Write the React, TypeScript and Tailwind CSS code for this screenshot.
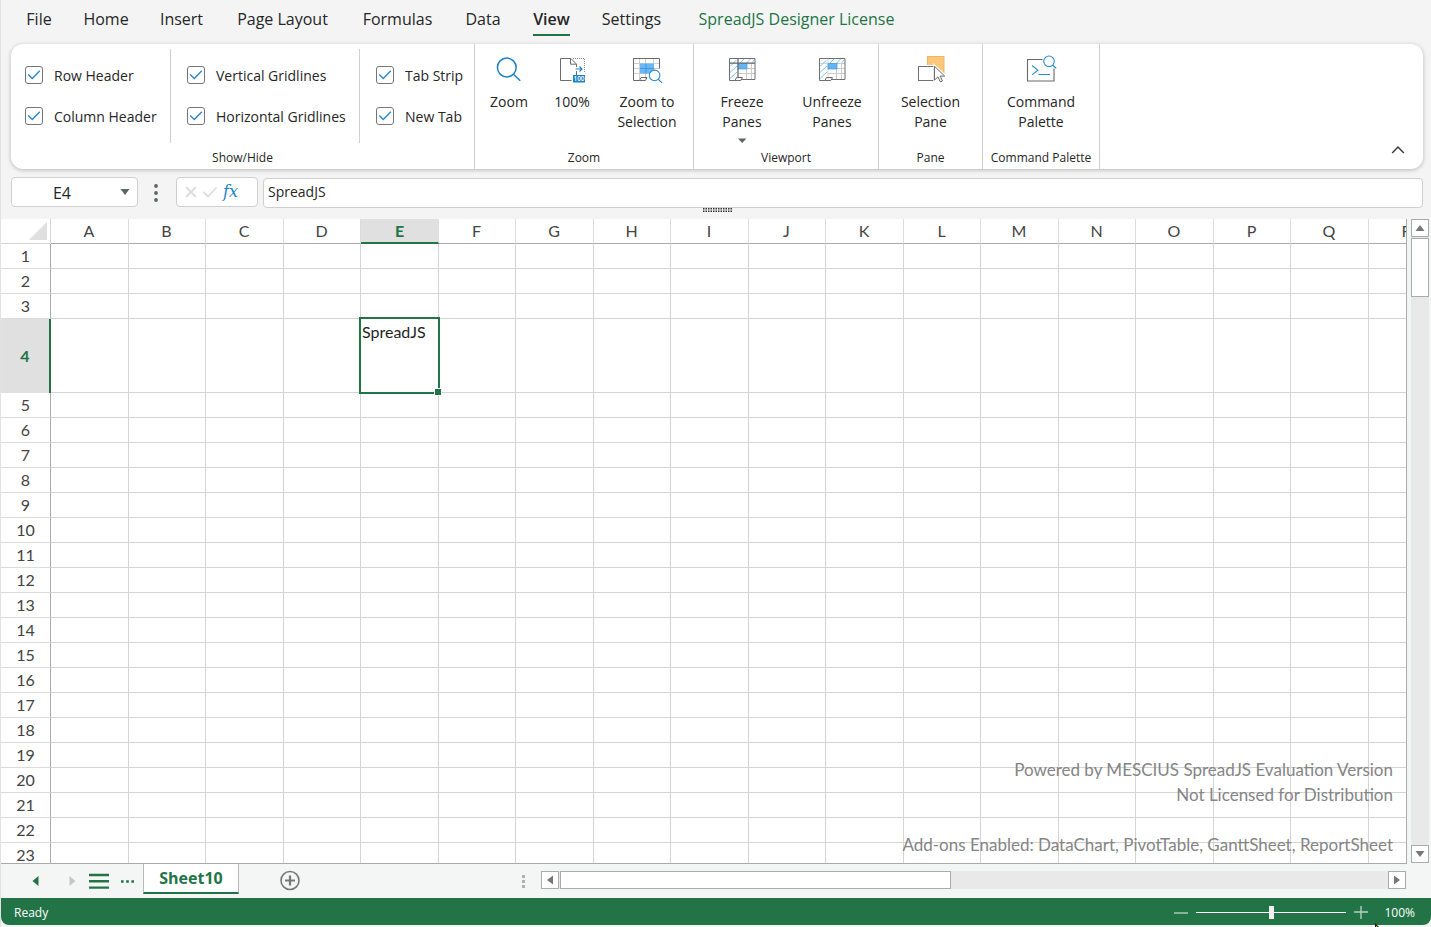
import React from "react";

const ui = "font-['Open_Sans','Noto_Sans',sans-serif]";
const gridFont = "font-['Lato','Open_Sans',sans-serif]";

const menu = [
  { label: "File", width: "w-[58px]" },
  { label: "Home", width: "w-[76px]" },
  { label: "Insert", width: "w-[75px]" },
  { label: "Page Layout", width: "w-[127px]" },
  { label: "Formulas", width: "w-[103px]" },
  { label: "Data", width: "w-[68px]" },
  { label: "View", width: "w-[69px]" },
  { label: "Settings", width: "w-[91px]" },
  { label: "SpreadJS Designer License", width: "w-[239px]" },
];

const columns = "ABCDEFGHIJKLMNOPQR".split("");
const rows = Array.from({ length: 23 }, (_, i) => i + 1);

function CheckItem({ label }: { label: string }) {
  return (
    <label className="flex h-[41px] items-center gap-[11px] whitespace-nowrap text-sm leading-[22px] text-[#262626]">
      <span className="grid size-[18px] shrink-0">
        <input
          type="checkbox"
          defaultChecked
          className="peer col-start-1 row-start-1 size-[18px] appearance-none rounded-[3px] border border-[#767676] bg-white"
        />
        <svg
          viewBox="0 0 18 18"
          className="pointer-events-none invisible col-start-1 row-start-1 size-[18px] peer-checked:visible"
          fill="none"
          stroke="#2b88d0"
          strokeWidth="1.4"
        >
          <path d="M3.2 8.4 7.3 12.4 14.8 4.8" />
        </svg>
      </span>
      <span className="pt-[2px]">{label}</span>
    </label>
  );
}

function Group({ label, className, children }: { label: string; className: string; children: React.ReactNode }) {
  return (
    <section className={`flex shrink-0 flex-col border-r border-[#d0d0d0] ${className}`}>
      <div className="flex h-[103px]">{children}</div>
      <div className="whitespace-nowrap text-center text-xs leading-[22px] text-[#262626]">{label}</div>
    </section>
  );
}

function Tool({
  lines,
  icon,
  className,
  arrow,
}: {
  lines: string[];
  icon: React.ReactNode;
  className: string;
  arrow?: boolean;
}) {
  return (
    <button className={`flex flex-col items-center pt-[9px] text-sm leading-5 text-[#262626] ${className}`}>
      <span className="mb-[7px] flex h-8 items-center">{icon}</span>
      {lines.map((l) => (
        <span key={l} className="whitespace-nowrap">
          {l}
        </span>
      ))}
      {arrow && (
        <svg viewBox="0 0 10 6" className="mt-[6px] h-[6px] w-[10px]">
          <path d="M1 .5h8.4L5.2 5z" fill="#5c6663" />
        </svg>
      )}
    </button>
  );
}

const ZoomIcon = () => (
  <svg viewBox="0 0 32 32" className="size-8" fill="none" stroke="#2080c4" strokeWidth="1.5">
    <circle cx="13.8" cy="14.5" r="9.4" />
    <path d="m20.5 21.2 6.8 6.6" />
  </svg>
);

const HundredIcon = () => (
  <svg viewBox="0 0 32 32" className="size-8" fill="none">
    <path d="M15.5 27.5H4.5v-22h10.5L20.5 11.2V14M14.5 5.5v5.7h6" stroke="#6d6d6d" />
    <path d="M20.5 18v4" stroke="#6d6d6d" />
    <path d="M17 5.5h11.5V20" stroke="#8a8a8a" strokeDasharray="1 1" />
    <path d="M19.5 16h6.5M23.5 13.5l2.5 2.5-2.5 2.5" stroke="#2080c4" strokeWidth="1.1" />
    <rect x="17" y="22" width="12" height="7.5" fill="#2080c4" />
    <text x="23" y="28.2" textAnchor="middle" fontSize="6.4" fontWeight="600" fill="#fff" className="font-['Open_Sans',sans-serif]">
      100
    </text>
  </svg>
);

const ZoomSelectionIcon = () => (
  <svg viewBox="0 0 32 32" className="size-8" fill="none">
    <path d="M8.5 6v20M14.5 6v20M22.5 6v20M3 10.5h26M3 15.5h26M3 20.5h26" stroke="#cfcfcf" />
    <rect x="9" y="10.5" width="14" height="10" fill="#6bb7f5" />
    <path d="M9 15.5h14M15 10.5v10" stroke="#3f9be2" />
    <path d="M8.5 27.5H2.5v-22h26V15.5M8.5 27.5l1.5-3h6l-1.5 3h-6" stroke="#696969" />
    <circle cx="23.6" cy="22.4" r="5.3" fill="#fff" stroke="#2b8ad0" strokeWidth="1.1" />
    <path d="m27.4 26.3 3.6 3.6" stroke="#2b8ad0" strokeWidth="1.2" />
  </svg>
);

const PanesIcon = ({ frozen }: { frozen?: boolean }) => (
  <svg viewBox="0 0 32 32" className="size-8" fill="none">
    <path d="M20.5 11v15M12 15.5h17M12 20.5h17M12 10.5h17M25.5 11v15" stroke="#cbcbcb" />
    <path d="M12 6v20M3.5 10.5h8" stroke="#d6d6d6" />
    <path d="m4 13.5 6-6M4 19.5l7-6.5M4 25.5l7-6.5M14 10l4-4M20.5 10l4-4M26 9.5l2.5-3" stroke="#7cc5ea" />
    <rect x="12" y="10.5" width="9" height="5.5" fill="#67b4f3" stroke="#3f98de" strokeWidth=".7" />
    {frozen && <path d="M3.5 10.2h25.5M12 6v18.5" stroke="#6a6a6a" strokeWidth="1.2" />}
    <path d="M9 27.5H3.5v-22h25.5v21H15M9 27.5l1.5-3h6l-1.7 3H9" stroke="#707070" />
  </svg>
);

const SelectionPaneIcon = () => (
  <svg viewBox="0 0 32 32" className="size-8" fill="none">
    <rect x="12.5" y="3.5" width="16.5" height="17" fill="#fcc67b" stroke="#eeb662" />
    <rect x="3.5" y="13.5" width="15.5" height="14" fill="#fff" stroke="#fff" strokeWidth="3" />
    <rect x="3.5" y="13.5" width="15.5" height="14" fill="#fff" stroke="#717171" />
    <path d="M19.5 12.8v14.7l3.7-3.3 2.3 5.3 2.6-1.2-2.3-5 4.7-.3z" fill="#fff" stroke="#fff" strokeWidth="2.4" />
    <path d="M19.5 13.3v13.8l3.5-3.3 2.4 5.2 2-1-2.2-4.9h4.5z" fill="#fff" stroke="#6b6b6b" />
  </svg>
);

const CommandIcon = () => (
  <svg viewBox="0 0 32 32" className="size-8" fill="none">
    <path d="M17.5 6.5h-15v21.5h26.5V15.5" stroke="#686868" strokeWidth="1.1" />
    <path d="m7 12.5 6 4.7-6 4.7M13.5 21.5h11.5" stroke="#2b8fce" strokeWidth="1.1" />
    <circle cx="24" cy="8.3" r="5.3" stroke="#2b8fce" strokeWidth="1.1" />
    <path d="m27.7 12.2 3.5 3" stroke="#2b8fce" strokeWidth="1.2" />
  </svg>
);

const scrollButton = "flex size-[18px] shrink-0 items-center justify-center border border-[#ababab] bg-white";

function Sheet() {
  return (
    <div className={`relative min-w-0 flex-1 overflow-hidden border-r border-b border-[#ababab] bg-white ${gridFont}`}>
      <table className="w-px table-fixed border-separate border-spacing-0 text-base leading-5 text-[#444]">
        <thead>
          <tr className="h-[25px]">
            <th className="w-[50px] border-r border-b border-r-[#d4d4d4] border-b-[#d4d4d4] p-0" aria-label="Select all">
              <svg viewBox="0 0 18 18" className="ml-auto mr-[3px] size-[18px]">
                <path d="M18 0v18H0z" fill="#dfdfdf" />
              </svg>
            </th>
            {columns.map((c, i) => (
              <th
                key={c}
                scope="col"
                className={`p-0 ${i % 2 ? "w-[77px]" : "w-[78px]"} ${
                  c === "E"
                    ? "border-r border-b-2 border-r-[#dcdcdc] border-b-[#227447] bg-[#e0e0e0] font-bold text-[#227447]"
                    : "border-r border-b border-r-[#dcdcdc] border-b-[#ababab] pr-px font-normal"
                }`}
              >
                {c}
              </th>
            ))}
          </tr>
        </thead>
        <tbody>
          {rows.map((r) => (
            <tr key={r} className={r === 4 ? "h-[74px]" : "h-[25px]"}>
              <th
                scope="row"
                className={`p-0 ${
                  r === 4
                    ? "border-r-2 border-[#227447] bg-[#e0e0e0] font-bold text-[#227447]"
                    : "border-r border-b border-r-[#ababab] border-b-[#dcdcdc] font-normal"
                }`}
              >
                {r}
              </th>
              {columns.map((c) =>
                r === 4 && c === "E" ? (
                  <td key={c} className="relative border-r border-b border-[#d4d4d4] p-0 align-top text-[#1f1f1f]">
                    <div className="px-px pt-[3px]">SpreadJS</div>
                    <div className="pointer-events-none absolute -top-0.5 -right-0.5 -bottom-0.5 -left-0.5 border-2 border-[#227447]">
                      <div className="absolute -right-1 -bottom-1 size-[8px] border border-white bg-[#227447]" />
                    </div>
                  </td>
                ) : (
                  <td key={c} className="border-r border-b border-[#d4d4d4] p-0" />
                ),
              )}
            </tr>
          ))}
        </tbody>
      </table>
      <div className="pointer-events-none absolute right-[13px] bottom-[6px] text-right text-[17px] leading-[25px] whitespace-nowrap text-[#858585]">
        <p>Powered by MESCIUS SpreadJS Evaluation Version</p>
        <p>Not Licensed for Distribution</p>
        <p className="mt-[25px]">Add-ons Enabled: DataChart, PivotTable, GanttSheet, ReportSheet</p>
      </div>
    </div>
  );
}

export default function App() {
  return (
    <div className={`relative flex h-screen flex-col overflow-hidden border-l border-[#e2e2e2] bg-[#f4f4f4] ${ui}`}>
      <nav className="flex h-11 shrink-0 pl-[9px] text-base text-[#262626]">
        {menu.map((m) => {
          const active = m.label === "View";
          const license = m.label.startsWith("SpreadJS");
          return (
            <button key={m.label} className={`flex shrink-0 justify-center pt-[7px] ${m.width}`}>
              <span
                className={`h-[29px] whitespace-nowrap leading-6 ${
                  active ? "border-b-2 border-[#227447] font-semibold" : license ? "text-[#227447]" : ""
                }`}
              >
                {m.label}
              </span>
            </button>
          );
        })}
      </nav>

      <div className="mr-2 ml-[10px] flex h-[125px] shrink-0 overflow-hidden rounded-xl bg-white shadow-[0_1px_4px_rgba(0,0,0,0.25)]">
        <Group label="Show/Hide" className="w-[464px]">
          <div className="mt-[5px] mb-1 w-[160px] border-r border-[#d0d0d0] pt-[5px] pl-[14px]">
            <CheckItem label="Row Header" />
            <CheckItem label="Column Header" />
          </div>
          <div className="mt-[5px] mb-1 w-[189px] border-r border-[#d0d0d0] pt-[5px] pl-4">
            <CheckItem label="Vertical Gridlines" />
            <CheckItem label="Horizontal Gridlines" />
          </div>
          <div className="mt-[10px] pl-4">
            <CheckItem label="Tab Strip" />
            <CheckItem label="New Tab" />
          </div>
        </Group>
        <Group label="Zoom" className="w-[219px]">
          <Tool lines={["Zoom"]} icon={<ZoomIcon />} className="ml-[2px] w-[64px]" />
          <Tool lines={["100%"]} icon={<HundredIcon />} className="w-[62px]" />
          <Tool lines={["Zoom to", "Selection"]} icon={<ZoomSelectionIcon />} className="w-[88px]" />
        </Group>
        <Group label="Viewport" className="w-[185px]">
          <Tool lines={["Freeze", "Panes"]} icon={<PanesIcon frozen />} className="ml-[3px] w-[90px]" arrow />
          <Tool lines={["Unfreeze", "Panes"]} icon={<PanesIcon />} className="w-[90px]" />
        </Group>
        <Group label="Pane" className="w-[104px]">
          <Tool lines={["Selection", "Pane"]} icon={<SelectionPaneIcon />} className="w-full" />
        </Group>
        <Group label="Command Palette" className="w-[117px]">
          <Tool lines={["Command", "Palette"]} icon={<CommandIcon />} className="w-full" />
        </Group>
        <button aria-label="Collapse ribbon" className="mt-auto mr-[18px] mb-[13px] ml-auto">
          <svg viewBox="0 0 14 12" className="h-3 w-[14px]" fill="none" stroke="#3c3c3c" strokeWidth="1.5">
            <path d="m1.2 9 5.8-6 5.8 6" />
          </svg>
        </button>
      </div>

      <div className="mr-2 ml-[10px] flex h-[50px] shrink-0 pt-2">
        <div className="flex h-[30px] w-[127px] items-center rounded border border-[#cfcfcf] bg-white">
          <input
            aria-label="Name box"
            defaultValue="E4"
            className="w-[100px] min-w-0 pt-[2px] text-center text-base text-[#262626] outline-none"
          />
          <button aria-label="Cell names" className="flex h-full flex-1 items-center justify-center">
            <svg viewBox="0 0 10 6" className="h-[6px] w-[10px]">
              <path d="M.5 0h9L5 6z" fill="#5c6663" />
            </svg>
          </button>
        </div>
        <svg viewBox="0 0 6 20" className="mx-[15px] mt-[6px] h-5 w-[6px]" fill="#5c6663">
          <circle cx="3" cy="3" r="1.9" />
          <circle cx="3" cy="10" r="1.9" />
          <circle cx="3" cy="17" r="1.9" />
        </svg>
        <div className="ml-[2px] flex h-[30px] w-[82px] items-center gap-[5px] rounded border border-[#cfcfcf] bg-white pb-px pl-2">
          <button aria-label="Cancel">
            <svg viewBox="0 0 12 12" className="size-3" fill="none" stroke="#dcdcdc" strokeWidth="1.8">
              <path d="m1 1 10 10M11 1 1 11" />
            </svg>
          </button>
          <button aria-label="Enter">
            <svg viewBox="0 0 16 12" className="h-3 w-4" fill="none" stroke="#dedede" strokeWidth="1.8">
              <path d="m1.5 6 4.5 4.5L14.5 1.5" />
            </svg>
          </button>
          <button className="font-['DejaVu_Serif',serif] text-base leading-6 text-[#2080c4] italic">fx</button>
        </div>
        <div className="ml-[5px] flex-1 pt-px">
          <input
            aria-label="Formula"
            defaultValue="SpreadJS"
            className="h-[30px] w-full rounded border border-[#cfcfcf] bg-white px-1 pb-1 text-sm text-[#262626] outline-none"
          />
        </div>
        <svg viewBox="0 0 30 4" className="absolute top-[208px] left-[702px] h-1 w-[30px]">
          <path d="M0 .75h30M0 3.25h30" stroke="#333" strokeWidth="1.5" strokeDasharray="1.5 1" />
        </svg>
      </div>

      <div className="flex min-h-0 flex-1 bg-[#f4f6f6]">
        <Sheet />
        <div className="mr-[2px] mb-px ml-1 flex w-[18px] shrink-0 flex-col bg-[#e9e9e9]">
          <button aria-label="Scroll up" className={scrollButton}>
            <svg viewBox="0 0 10 6" className="h-[6px] w-[10px]">
              <path d="M.5 6h9L5 0z" fill="#777" />
            </svg>
          </button>
          <div className="mt-px h-[59px] border border-[#ababab] bg-white" />
          <button aria-label="Scroll down" className={`mt-auto ${scrollButton}`}>
            <svg viewBox="0 0 10 6" className="h-[6px] w-[10px]">
              <path d="M.5 0h9L5 6z" fill="#777" />
            </svg>
          </button>
        </div>
      </div>

      <div className="flex h-[34px] shrink-0 bg-[#f4f6f6] pr-[25px]">
        <div className="flex w-[142px] shrink-0 items-center pl-[31px]">
          <button aria-label="Previous sheet">
            <svg viewBox="0 0 7 10" className="h-[10px] w-[7px]">
              <path d="M6.5 0v10L.5 5z" fill="#227447" />
            </svg>
          </button>
          <button aria-label="Next sheet" className="ml-[30px]">
            <svg viewBox="0 0 7 10" className="h-[10px] w-[7px]">
              <path d="M.5 0v10l6-5z" fill="#c6c6c6" />
            </svg>
          </button>
          <button aria-label="All sheets" className="ml-[13px]">
            <svg viewBox="0 0 20 16" className="h-4 w-5" stroke="#227447" strokeWidth="2.4">
              <path d="M0 2h20M0 8.3h20M0 14.6h20" />
            </svg>
          </button>
          <button aria-label="More sheets" className="ml-3">
            <svg viewBox="0 0 14 3" className="h-[3px] w-[14px]" fill="#227447">
              <path d="M0 .3h2.6v2.4H0zM5.2 .3h2.6v2.4H5.2zM10.4 .3H13v2.4h-2.6z" />
            </svg>
          </button>
        </div>
        <button className="-mt-px h-[31px] w-24 shrink-0 border-x border-b-2 border-x-[#b8b8b8] border-b-[#227447] bg-white pt-px text-base leading-7 font-bold text-[#227447]">
          Sheet10
        </button>
        <button aria-label="New sheet" className="ml-[40px]">
          <svg viewBox="0 0 22 22" className="size-[22px]" fill="none" stroke="#777">
            <circle cx="11" cy="10.5" r="9" strokeWidth="1.6" />
            <path d="M11 5.5v10M6 10.5h10" strokeWidth="2.2" />
          </svg>
        </button>
        <svg viewBox="0 0 3 13" className="mt-[11px] ml-[221px] h-[13px] w-[3px] shrink-0" fill="#b0b0b0">
          <path d="M0 0h3v3H0zM0 5h3v3H0zM0 10h3v3H0z" />
        </svg>
        <div className="mt-[7px] ml-4 flex h-[18px] flex-1 bg-[#e9e9e9]">
          <button aria-label="Scroll left" className={scrollButton}>
            <svg viewBox="0 0 6 10" className="h-[10px] w-[6px]">
              <path d="M6 .5v9L0 5z" fill="#777" />
            </svg>
          </button>
          <div className="ml-px w-[391px] border border-[#ababab] bg-white" />
          <button aria-label="Scroll right" className={`ml-auto ${scrollButton}`}>
            <svg viewBox="0 0 6 10" className="h-[10px] w-[6px]">
              <path d="M0 .5v9L6 5z" fill="#777" />
            </svg>
          </button>
        </div>
      </div>

      <footer className="mb-[2px] flex h-[27px] shrink-0 items-center rounded-b-lg bg-[#227447] pt-[2px] pr-4 pl-[13px] text-xs text-white">
        <span>Ready</span>
        <button aria-label="Zoom out" className="mr-2 ml-auto">
          <svg viewBox="0 0 14 14" className="size-[14px]" stroke="#b5cfc0" strokeWidth="1.4">
            <path d="M0 7h14" />
          </svg>
        </button>
        <input
          type="range"
          aria-label="Zoom"
          min="0"
          max="100"
          defaultValue="50"
          className="h-[14px] w-[150px] appearance-none bg-[linear-gradient(#fff,#fff)] bg-[length:100%_1px] bg-center bg-no-repeat [&::-webkit-slider-thumb]:h-[13px] [&::-webkit-slider-thumb]:w-[5px] [&::-webkit-slider-thumb]:appearance-none [&::-webkit-slider-thumb]:bg-[#f0f0f0]"
        />
        <button aria-label="Zoom in" className="mr-4 ml-2">
          <svg viewBox="0 0 14 14" className="size-[14px]" stroke="#b5cfc0" strokeWidth="1.4">
            <path d="M0 6h14M7 0v13" />
          </svg>
        </button>
        <span>100%</span>
      </footer>
      <svg viewBox="0 0 4 4" className="pointer-events-none absolute right-[52px] bottom-0 size-1">
        <path d="M0 0l4 4H0z" fill="#1a1a1a" />
        <path d="M1 2.5 2.5 4H1z" fill="#e8b84a" />
      </svg>
    </div>
  );
}
